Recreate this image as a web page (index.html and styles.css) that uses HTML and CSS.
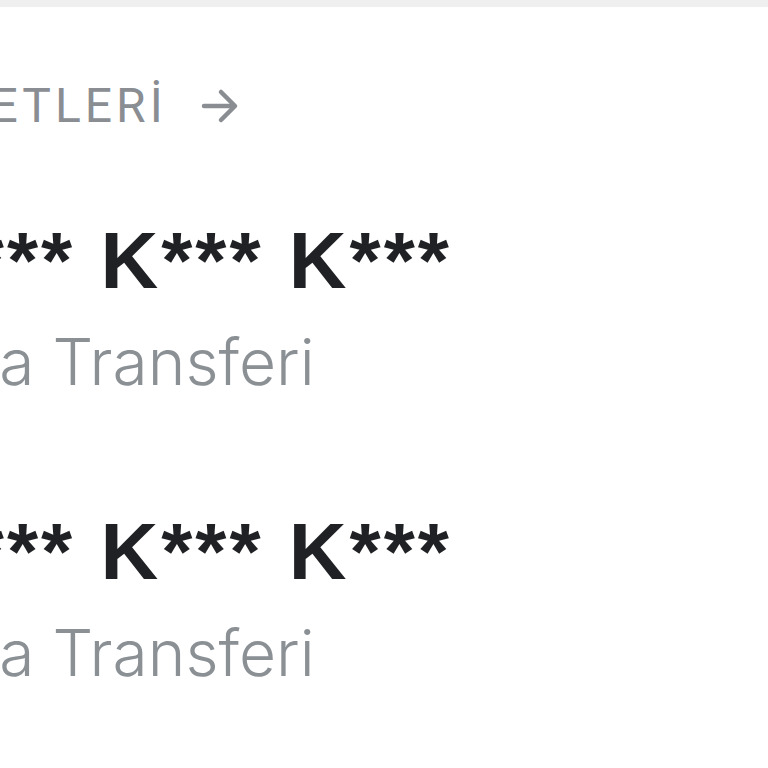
FILE: index.html
```html
<!DOCTYPE html>
<html lang="tr">
<head>
    <meta charset="UTF-8">
    <meta name="viewport" content="width=device-width, initial-scale=1.0">
    <title>Hesap Hareketleri</title>
    <link rel="stylesheet" href="styles.css">
</head>
<body>
    <div class="topbar"></div>
    <div class="card">
        <a class="section-link" href="#">
            <span class="section-title">TÜM HAREKETLERİ</span>
            <svg class="arrow" viewBox="0 0 40 40" width="40" height="40">
                <path d="M4 20 H34 M21 6 L35 20 L21 34" fill="none" stroke="currentColor" stroke-width="4.5" stroke-linecap="round" stroke-linejoin="round"/>
            </svg>
        </a>

        <div class="tx-list">
            <div class="tx">
                <div class="tx-name">A*** K*** K***</div>
                <div class="tx-type">Para Transferi</div>
            </div>
            <div class="tx">
                <div class="tx-name">A*** K*** K***</div>
                <div class="tx-type">Para Transferi</div>
            </div>
        </div>
    </div>
</body>
</html>
```

FILE: styles.css
```css
body {
    margin: 0;
    background-color: #ffffff;
    overflow: hidden;
    height: 768px;
}

.topbar {
    height: 7px;
    background-color: #efefef;
}

/* kartın sol kısmı ekranın dışında kalıyor */
.section-link {
    display: flex;
    align-items: center;
    gap: 33px;
    margin-top: 75px;
    margin-left: -312px;
    color: #8a8e92;
    text-decoration: none;
}

.section-title {
    font-family: Roboto, 'Liberation Sans', sans-serif;
    font-size: 48px;
    line-height: 48px;
    letter-spacing: 4px;
    white-space: nowrap;
}

.arrow {
    width: 40px;
    height: 40px;
}

.tx-list {
    margin-top: 91px;
    display: flex;
    flex-direction: column;
    gap: 118px;
}

.tx-name {
    margin-left: -88px;
    font-family: 'Liberation Sans', Arial, sans-serif;
    font-weight: bold;
    font-size: 80px;
    line-height: 80px;
    letter-spacing: 3px;
    white-space: nowrap;
    color: #1f2124;
}

.tx-type {
    margin-top: 29px;
    margin-left: -99px;
    font-family: Inter, 'Noto Sans', sans-serif;
    font-weight: 300;
    font-size: 64px;
    line-height: 64px;
    white-space: nowrap;
    color: #8b9095;
}
```
